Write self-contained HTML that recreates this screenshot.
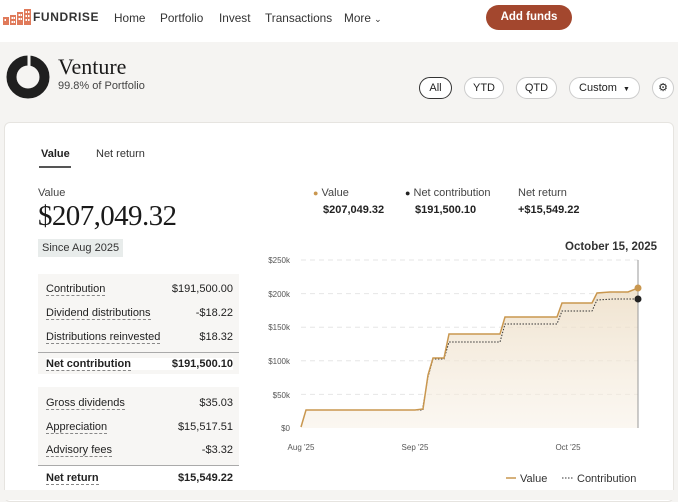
<!DOCTYPE html>
<html><head><meta charset="utf-8"><style>
*{margin:0;padding:0;box-sizing:border-box}
body{width:678px;height:500px;overflow:hidden;background:#f5f4f2;font-family:"Liberation Sans",sans-serif;color:#222;position:relative}
.a{position:absolute;white-space:nowrap}
.nav{position:absolute;left:0;top:0;width:678px;height:42px;background:#fff}
.nl{font-size:11.8px;color:#333;top:11px}
.btn{position:absolute;left:486px;top:5px;width:86px;height:25px;border-radius:13px;background:#a3472e;color:#fff;font-size:11.5px;font-weight:bold;text-align:center;line-height:25px}
.pill{position:absolute;top:77px;height:22px;border:1px solid #ccc;border-radius:11px;background:#fff;font-size:11px;text-align:center;line-height:20px;color:#222}
.card{position:absolute;left:4px;top:122px;width:670px;height:380px;background:#fff;border:1px solid #e6e4e0;border-radius:6px}
.tbl{position:absolute;left:38px;width:201px;background:#f7f6f4}
.r{position:absolute;left:8px;right:6px;font-size:11px;color:#222}
.r span:first-child{border-bottom:1px dashed #888}
.r span:last-child{position:absolute;right:0}
.b{font-weight:bold}
</style></head><body>
<div class="nav"></div>
<svg class="a" style="left:3px;top:9px" width="28" height="16" viewBox="0 0 28 16">
<g fill="#e07a5a"><rect x="0" y="8" width="6" height="8"/><rect x="7" y="6" width="6" height="10"/><rect x="14" y="3" width="6" height="13"/><rect x="21" y="0" width="7" height="16"/></g>
<g fill="#fff"><rect x="1.5" y="10" width="1.5" height="2"/><rect x="8.5" y="8" width="1.5" height="2"/><rect x="10.5" y="8" width="1.5" height="2"/><rect x="8.5" y="12" width="1.5" height="2"/><rect x="10.5" y="12" width="1.5" height="2"/><rect x="15.5" y="5" width="1.5" height="2"/><rect x="17.5" y="5" width="1.5" height="2"/><rect x="15.5" y="9" width="1.5" height="2"/><rect x="17.5" y="9" width="1.5" height="2"/><rect x="22.5" y="2" width="1.5" height="2"/><rect x="25" y="2" width="1.5" height="2"/><rect x="22.5" y="6" width="1.5" height="2"/><rect x="25" y="6" width="1.5" height="2"/><rect x="22.5" y="10" width="1.5" height="2"/><rect x="25" y="10" width="1.5" height="2"/></g></svg>
<div class="a" style="left:33px;top:10px;font-size:12px;font-weight:bold;letter-spacing:0.6px;color:#333">FUNDRISE</div>
<div class="a nl" style="left:114px">Home</div>
<div class="a nl" style="left:160px">Portfolio</div>
<div class="a nl" style="left:219px">Invest</div>
<div class="a nl" style="left:265px">Transactions</div>
<div class="a nl" style="left:344px">More <span style="font-size:9px">&#8964;</span></div>
<div class="btn">Add funds</div>

<svg class="a" style="left:6px;top:55px" width="44" height="44" viewBox="0 0 44 44"><circle cx="22" cy="22" r="16.5" fill="none" stroke="#1f1f1f" stroke-width="10"/><rect x="21.5" y="0" width="3" height="12" fill="#f5f4f2"/></svg>
<div class="a" style="left:58px;top:54px;font-family:'Liberation Serif',serif;font-size:22px;color:#1a1a1a">Venture</div>
<div class="a" style="left:58px;top:80px;font-size:11px;color:#444">99.8% of Portfolio</div>
<div class="pill" style="left:419px;width:33px;border-color:#333">All</div>
<div class="pill" style="left:464px;width:40px">YTD</div>
<div class="pill" style="left:516px;width:41px">QTD</div>
<div class="pill" style="left:569px;width:71px">Custom &nbsp;<span style="font-size:7px">&#9660;</span></div>
<div class="pill" style="left:652px;width:22px;font-size:11px">&#9881;</div>

<div class="card"></div>
<div class="a" style="left:41px;top:148px;font-size:11px;font-weight:bold">Value</div>
<div class="a" style="left:39px;top:166px;width:32px;height:2px;background:#555"></div>
<div class="a" style="left:96px;top:148px;font-size:11px;color:#333">Net return</div>
<div class="a" style="left:38px;top:187px;font-size:11px;color:#444">Value</div>
<div class="a" style="left:38px;top:200px;font-family:'Liberation Serif',serif;font-size:29px;color:#1a1a1a;letter-spacing:-0.6px">$207,049.32</div>
<div class="a" style="left:38px;top:239px;height:18px;padding:0 4px;background:#e8eceb;font-size:11px;line-height:18px;color:#333">Since Aug 2025</div>

<div class="tbl" style="top:274px;height:100px"></div>
<div class="a" style="left:38px;top:352px;width:201px;height:1px;background:#aaa"></div>
<div class="tbl" style="top:387px;height:78px"></div>
<div class="a" style="left:38px;top:465px;width:201px;height:1px;background:#aaa"></div>
<div class="tbl" style="top:466px;height:24px;background:#fff"></div>
<div class="r" style="left:46px;width:187px;top:283px"><span>Contribution</span><span>$191,500.00</span></div>
<div class="r" style="left:46px;width:187px;top:307px"><span>Dividend distributions</span><span>-$18.22</span></div>
<div class="r" style="left:46px;width:187px;top:331px"><span>Distributions reinvested</span><span>$18.32</span></div>
<div class="r b" style="left:46px;width:187px;top:358px;background:#fff"><span>Net contribution</span><span>$191,500.10</span></div>
<div class="r" style="left:46px;width:187px;top:397px"><span>Gross dividends</span><span>$35.03</span></div>
<div class="r" style="left:46px;width:187px;top:421px"><span>Appreciation</span><span>$15,517.51</span></div>
<div class="r" style="left:46px;width:187px;top:444px"><span>Advisory fees</span><span>-$3.32</span></div>
<div class="r b" style="left:46px;width:187px;top:472px"><span>Net return</span><span>$15,549.22</span></div>

<div class="a" style="left:313px;top:187px;font-size:11px;color:#444"><span style="color:#c9974f;font-size:9px">&#9679;</span> Value</div>
<div class="a" style="left:323px;top:204px;font-size:11px;font-weight:bold">$207,049.32</div>
<div class="a" style="left:405px;top:187px;font-size:11px;color:#444"><span style="color:#222;font-size:9px">&#9679;</span> Net contribution</div>
<div class="a" style="left:415px;top:204px;font-size:11px;font-weight:bold">$191,500.10</div>
<div class="a" style="left:518px;top:187px;font-size:11px;color:#444">Net return</div>
<div class="a" style="left:518px;top:204px;font-size:11px;font-weight:bold">+$15,549.22</div>
<div class="a" style="left:565px;top:241px;font-size:11.5px;font-weight:bold;color:#333">October 15, 2025</div>

<svg class="a" style="left:250px;top:250px" width="428" height="250" viewBox="250 250 428 250">
<defs><linearGradient id="g" x1="0" y1="0" x2="0" y2="1"><stop offset="0" stop-color="#ecdcc3" stop-opacity=".8"/><stop offset="1" stop-color="#f7efe3" stop-opacity=".5"/></linearGradient></defs>
<g stroke="#e6e6e6" stroke-dasharray="5 4" stroke-width="1"><line x1="301" y1="260" x2="638" y2="260"/><line x1="301" y1="293.6" x2="638" y2="293.6"/><line x1="301" y1="327.2" x2="638" y2="327.2"/><line x1="301" y1="360.8" x2="638" y2="360.8"/><line x1="301" y1="394.4" x2="638" y2="394.4"/></g>
<g font-size="8" fill="#555" text-anchor="end" font-family="Liberation Sans"><text x="290" y="263">$250k</text><text x="290" y="297">$200k</text><text x="290" y="330">$150k</text><text x="290" y="364">$100k</text><text x="290" y="398">$50k</text><text x="290" y="431">$0</text></g>
<g font-size="8" fill="#555" text-anchor="middle" font-family="Liberation Sans"><text x="301" y="450">Aug '25</text><text x="415" y="450">Sep '25</text><text x="568" y="450">Oct '25</text></g>
<path d="M301 427L306 410L415 410L423 409L428 375L433 358L444 358L449 334L500 334L505 317L557 317L562 303L592 303L597 293L610 292L628 292L638 288L638 428L301 428Z" fill="url(#g)"/>
<line x1="638" y1="260" x2="638" y2="428" stroke="#999" stroke-width="1"/>
<path d="M306 410L415 410L418 410L423 410L423 406L428 377L433 359L444 359L449 342L500 342L505 324L557 324L562 311L592 311L597 300L613 299L638 299" fill="none" stroke="#333" stroke-width="1" stroke-dasharray="1.5 1.5"/>
<path d="M301 427L306 410L415 410L423 409L428 375L433 358L444 358L449 334L500 334L505 317L557 317L562 303L592 303L597 293L610 292L628 292L638 288" fill="none" stroke="#c9974f" stroke-width="1.5"/>
<circle cx="638" cy="288" r="3.5" fill="#c9974f"/><circle cx="638" cy="299" r="3.5" fill="#222"/>
<line x1="506" y1="478" x2="516" y2="478" stroke="#c9974f" stroke-width="1.5"/>
<line x1="562" y1="478" x2="573" y2="478" stroke="#333" stroke-dasharray="1.5 1.5"/>
<text x="520" y="482" font-size="11" fill="#333" font-family="Liberation Sans">Value</text>
<text x="577" y="482" font-size="11" fill="#333" font-family="Liberation Sans">Contribution</text>
</svg>
<div class="a" style="left:0;top:490px;width:678px;height:10px;background:#f5f4f2"></div>
</body></html>
